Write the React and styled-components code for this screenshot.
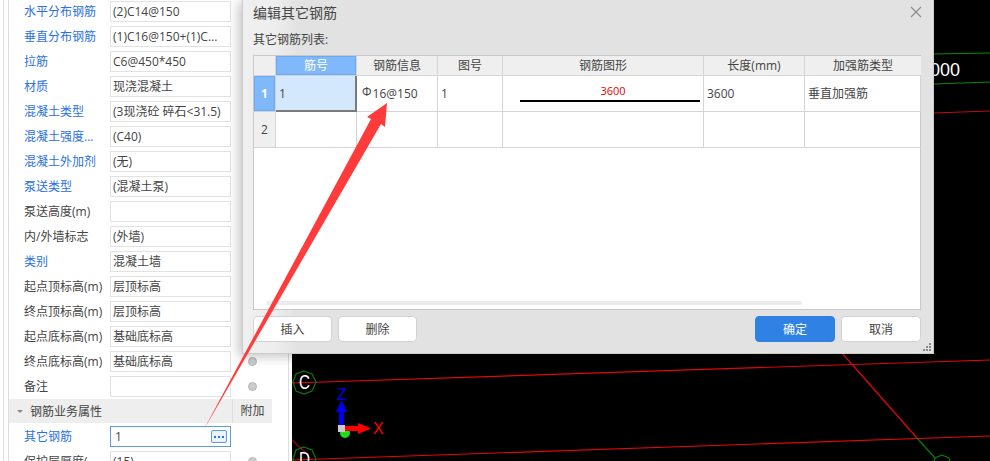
import React from "react";
import styled, { createGlobalStyle } from "styled-components";

const Global = createGlobalStyle`
  html, body { margin: 0; padding: 0; background: #fff; }
  body { font-family: "Open Sans", "Noto Sans CJK SC", sans-serif; font-size: 12px; color: #333; }
`;

const Page = styled.div`
  position: relative;
  width: 990px;
  height: 461px;
  overflow: hidden;
  display: flex;
  background: #000;
`;

const Sidebar = styled.aside`
  flex: 0 0 292px;
  background: #fff;
  padding: 0 3px;
  box-sizing: border-box;
  overflow: hidden;
`;
const Panel = styled.div`
  height: 100%;
  box-sizing: border-box;
  border-left: 1px solid #ddd;
  border-right: 1px solid #ddd;
  padding-left: 4px;
  overflow: hidden;
`;
const Inner = styled.div`
  border-left: 1px solid #ddd;
  height: 100%;
`;
const Row = styled.div`
  display: flex;
  align-items: flex-start;
  height: 25px;
  padding-top: 1px;
  box-sizing: border-box;
`;
const Label = styled.div`
  flex: 0 0 86px;
  margin-left: 15px;
  line-height: 21px;
  white-space: nowrap;
  overflow: hidden;
  color: ${p => (p.$blue ? "#2a6fe6" : "#444")};
`;
const Value = styled.div`
  position: relative;
  flex: 0 0 121px;
  height: 21px;
  box-sizing: border-box;
  border: 1px solid ${p => (p.$active ? "#5b9be8" : "#e2e2e2")};
  padding-left: ${p => (p.$active ? "4px" : "2px")};
  line-height: 19px;
  white-space: nowrap;
  overflow: hidden;
  color: #444;
`;
const Radio = styled.span`
  width: 7px;
  height: 7px;
  margin: 6px 0 0 17px;
  border-radius: 50%;
  background: #ccc;
  border: 1px solid #b5b5b5;
`;
const MoreButton = styled.span`
  position: absolute;
  right: 3px;
  top: 3px;
  width: 16px;
  height: 13px;
  box-sizing: border-box;
  border: 1px solid #5b9be8;
  border-radius: 2px;
  background: #eaf3fd;
  display: flex;
  align-items: center;
  justify-content: center;
`;
const SectionHeader = styled.div`
  display: flex;
  align-items: center;
  height: 24px;
  margin: -1px 0 2px;
  background: #eee;
  width: 263px;
  color: #444;
`;
const Caret = styled.span`
  width: 0;
  height: 0;
  margin: 0 7px 0 8px;
  border-left: 3px solid transparent;
  border-right: 3px solid transparent;
  border-top: 3px solid #888;
`;
const SectionTitle = styled.span`
  flex: 0 0 202px;
`;
const SectionExtra = styled.span`
  flex: 1;
  height: 100%;
  line-height: 24px;
  text-align: center;
  border-left: 1px solid #ddd;
`;

const Cad = styled.svg`
  flex: 1;
  height: 461px;
  display: block;
`;

const Dialog = styled.section`
  position: absolute;
  left: 242px;
  top: -1px;
  width: 692px;
  height: 355px;
  box-sizing: border-box;
  border: 1px solid #ccc;
  padding: 0 12px 0 10px;
  background: linear-gradient(to right, #efefef 0, #eeeeee 30px, #e2e2e2 55px);
  box-shadow: -4px 3px 10px rgba(0, 0, 0, 0.22);
  display: flex;
  flex-direction: column;
`;
const TitleBar = styled.header`
  display: flex;
  justify-content: space-between;
  align-items: center;
  height: 24px;
  font-size: 14px;
  color: #444;
`;
const ListLabel = styled.div`
  margin-top: 7px;
  height: 24px;
  line-height: 18px;
  color: #444;
`;
const Table = styled.div`
  position: relative;
  width: 668px;
  height: 255px;
  box-sizing: border-box;
  border: 1px solid #c8c8c8;
  background: #fff;
`;
const Grid = styled.div`
  display: grid;
  grid-template-columns: 22px 81px 81px 65px 201px 101px 116px;
  grid-template-rows: 20px 36px 36px;
`;
const Cell = styled.div`
  box-sizing: border-box;
  border-right: 1px solid #d4d4d4;
  border-bottom: 1px solid #d4d4d4;
  padding: 0 3px;
  line-height: 35px;
  color: #444;
  white-space: nowrap;
  overflow: hidden;
  &:last-child { border-right: 0; }
`;
const HeadCell = styled(Cell)`
  background: ${p => (p.$selected ? "#7fb9fb" : "#efefef")};
  color: ${p => (p.$selected ? "#fff" : "#444")};
  text-align: center;
  line-height: 19px;
  ${p => p.$selected && "box-shadow: inset 0 0 0 1px #6aa9f5;"}
`;
const LastHead = styled(HeadCell)`
  border-right: 0;
`;
const RowHead = styled(Cell)`
  padding: 0;
  text-align: center;
  background: ${p => (p.$selected ? "#7fb9fb" : "#efefef")};
  color: ${p => (p.$selected ? "#fff" : "#444")};
  font-weight: ${p => (p.$selected ? 700 : 400)};
  ${p => p.$selected && "box-shadow: inset 0 0 0 1px #6aa9f5;"}
`;
const ActiveCell = styled(Cell)`
  background: #d4e8fd;
  border-right: 2px solid #7b7b7b;
  border-bottom: 2px solid #7b7b7b;
`;
const GradeMark = styled.span`
  position: relative;
  top: -2px;
  margin: 0 1px 0 2px;
`;
const ShapeCell = styled(Cell)`
  display: flex;
  justify-content: flex-end;
`;
const Shape = styled.div`
  width: 180px;
  height: 26px;
  box-sizing: border-box;
  border-bottom: 2px solid #000;
  color: #e00000;
  font-size: 11px;
  line-height: 30px;
  padding-left: 6px;
  text-align: center;
`;
const Scrollbar = styled.div`
  position: absolute;
  left: 12px;
  bottom: 4px;
  width: 536px;
  height: 4px;
  border-radius: 2px;
  background: #ececec;
`;
const Footer = styled.footer`
  display: flex;
  justify-content: space-between;
  margin-top: 6px;
`;
const ButtonGroup = styled.div`
  display: flex;
  gap: 6px;
`;
const Button = styled.button`
  width: ${p => (p.$narrow ? "79px" : "80px")};
  height: 26px;
  padding: 0;
  box-sizing: border-box;
  border: 1px solid ${p => (p.$primary ? "#2f82e4" : "#d2d2d2")};
  border-radius: 4px;
  background: ${p => (p.$primary ? "#2f82e4" : "#fff")};
  color: ${p => (p.$primary ? "#fff" : "#444")};
  font-family: inherit;
  font-size: 12px;
`;
const Grip = styled.svg`
  position: absolute;
  right: 1px;
  bottom: 1px;
`;
const Annotation = styled.svg`
  position: absolute;
  left: 0;
  top: 0;
  pointer-events: none;
`;

const fields = [
  ["水平分布钢筋", "(2)C14@150", true],
  ["垂直分布钢筋", "(1)C16@150+(1)C...", true],
  ["拉筋", "C6@450*450", true],
  ["材质", "现浇混凝土", true],
  ["混凝土类型", "(3现浇砼 碎石<31.5)", true],
  ["混凝土强度...", "(C40)", true],
  ["混凝土外加剂", "(无)", true],
  ["泵送类型", "(混凝土泵)", true],
  ["泵送高度(m)", "", false],
  ["内/外墙标志", "(外墙)", false],
  ["类别", "混凝土墙", true],
  ["起点顶标高(m)", "层顶标高", false],
  ["终点顶标高(m)", "层顶标高", false],
  ["起点底标高(m)", "基础底标高", false],
  ["终点底标高(m)", "基础底标高", false, true],
  ["备注", "", false, true],
];

const columns = ["筋号", "钢筋信息", "图号", "钢筋图形", "长度(mm)"];

const cadFont = "Liberation Sans, sans-serif";

export default function App() {
  return (
    <Page>
      <Global />
      <Sidebar>
        <Panel>
          <Inner>
            {fields.map(([label, value, blue, radio]) => (
              <Row key={label}>
                <Label $blue={blue}>{label}</Label>
                <Value>{value}</Value>
                {radio && <Radio />}
              </Row>
            ))}
            <SectionHeader>
              <Caret />
              <SectionTitle>钢筋业务属性</SectionTitle>
              <SectionExtra>附加</SectionExtra>
            </SectionHeader>
            <Row>
              <Label $blue>其它钢筋</Label>
              <Value $active>
                1
                <MoreButton>
                  <svg width="10" height="2" viewBox="0 0 10 2" fill="#2a6fe6">
                    <rect x="0" width="2" height="2" />
                    <rect x="4" width="2" height="2" />
                    <rect x="8" width="2" height="2" />
                  </svg>
                </MoreButton>
              </Value>
            </Row>
            <Row>
              <Label>保护层厚度(</Label>
              <Value>(15)</Value>
              <Radio />
            </Row>
          </Inner>
        </Panel>
      </Sidebar>

      <Cad viewBox="292 0 698 461">
        <g fill="none" strokeWidth="1.2">
          <path d="M933 54L990 53" stroke="#0a8a0a" />
          <path d="M933 84L990 82" stroke="#0a8a0a" />
          <path d="M933 113L990 111" stroke="#c00c0c" />
          <path d="M292 383L990 360" stroke="#e00808" />
          <path d="M292 460L990 436" stroke="#e00808" />
          <path d="M842 353L917 438" stroke="#e00808" />
          <path d="M917 438L935 458" stroke="#0a7a0a" />
          <path d="M292 440L305 452" stroke="#a00808" />
          <path d="M304 371L312 374L316 382L312 391L304 394L296 391L293 382L296 374Z" stroke="#0a7a0a" />
          <path d="M304 447L312 450L316 459L312 467L304 470L296 467L293 459L296 450Z" stroke="#0a7a0a" />
          <path d="M942 455L949 458L951 465L933 465L935 458Z" stroke="#0a7a0a" />
        </g>
        <text x="930" y="76" fill="#fff" fontSize="18" fontFamily={cadFont}>000</text>
        <text x="299" y="389" fill="#fff" fontSize="20" fontFamily={cadFont} textLength="11" lengthAdjust="spacingAndGlyphs">C</text>
        <text x="299" y="466" fill="#fff" fontSize="20" fontFamily={cadFont} textLength="11" lengthAdjust="spacingAndGlyphs">D</text>
        <circle cx="345" cy="433" r="5" fill="#1de01d" />
        <rect x="339" y="408" width="5" height="19" fill="#0000ee" />
        <path d="M341.5 400L347 412L336 412Z" fill="#0000ee" />
        <rect x="344" y="426" width="16" height="5" fill="#f00" />
        <path d="M371 428.5L358 423L358 434Z" fill="#f00" />
        <rect x="338" y="425" width="7" height="7" fill="#ccc" />
        <text x="337" y="400" fill="#0000ee" fontSize="16" fontFamily={cadFont}>Z</text>
        <text x="373" y="434" fill="#f00" fontSize="16" fontFamily={cadFont}>X</text>
      </Cad>

      <Dialog>
        <TitleBar>
          <span>编辑其它钢筋</span>
          <svg width="12" height="12" viewBox="0 0 12 12" style={{ marginRight: -1 }}>
            <path d="M1 1L11 11M11 1L1 11" stroke="#8a8a8a" strokeWidth="1.1" fill="none" />
          </svg>
        </TitleBar>
        <ListLabel>其它钢筋列表:</ListLabel>
        <Table>
          <Grid>
            <HeadCell />
            {columns.map((c, i) => (
              <HeadCell key={c} $selected={i === 0}>{c}</HeadCell>
            ))}
            <LastHead>加强筋类型</LastHead>

            <RowHead $selected>1</RowHead>
            <ActiveCell>1</ActiveCell>
            <Cell><GradeMark>Φ</GradeMark>16@150</Cell>
            <Cell>1</Cell>
            <ShapeCell><Shape>3600</Shape></ShapeCell>
            <Cell>3600</Cell>
            <Cell>垂直加强筋</Cell>

            <RowHead>2</RowHead>
            <Cell />
            <Cell />
            <Cell />
            <Cell />
            <Cell />
            <Cell />
          </Grid>
          <Scrollbar />
        </Table>
        <Footer>
          <ButtonGroup>
            <Button $narrow>插入</Button>
            <Button $narrow>删除</Button>
          </ButtonGroup>
          <ButtonGroup>
            <Button $primary>确定</Button>
            <Button>取消</Button>
          </ButtonGroup>
        </Footer>
        <Grip width="9" height="9" viewBox="0 0 9 9" fill="#8a8a8a">
          <rect x="6" y="0" width="2" height="2" />
          <rect x="3" y="3" width="2" height="2" />
          <rect x="6" y="3" width="2" height="2" />
          <rect x="0" y="6" width="2" height="2" />
          <rect x="3" y="6" width="2" height="2" />
          <rect x="6" y="6" width="2" height="2" />
        </Grip>
      </Dialog>

      <Annotation width="990" height="461" viewBox="0 0 990 461">
        <path d="M387 103L367 117L371 119L203 431L381 124L385 127Z" fill="#ff3b3b" />
      </Annotation>
    </Page>
  );
}
